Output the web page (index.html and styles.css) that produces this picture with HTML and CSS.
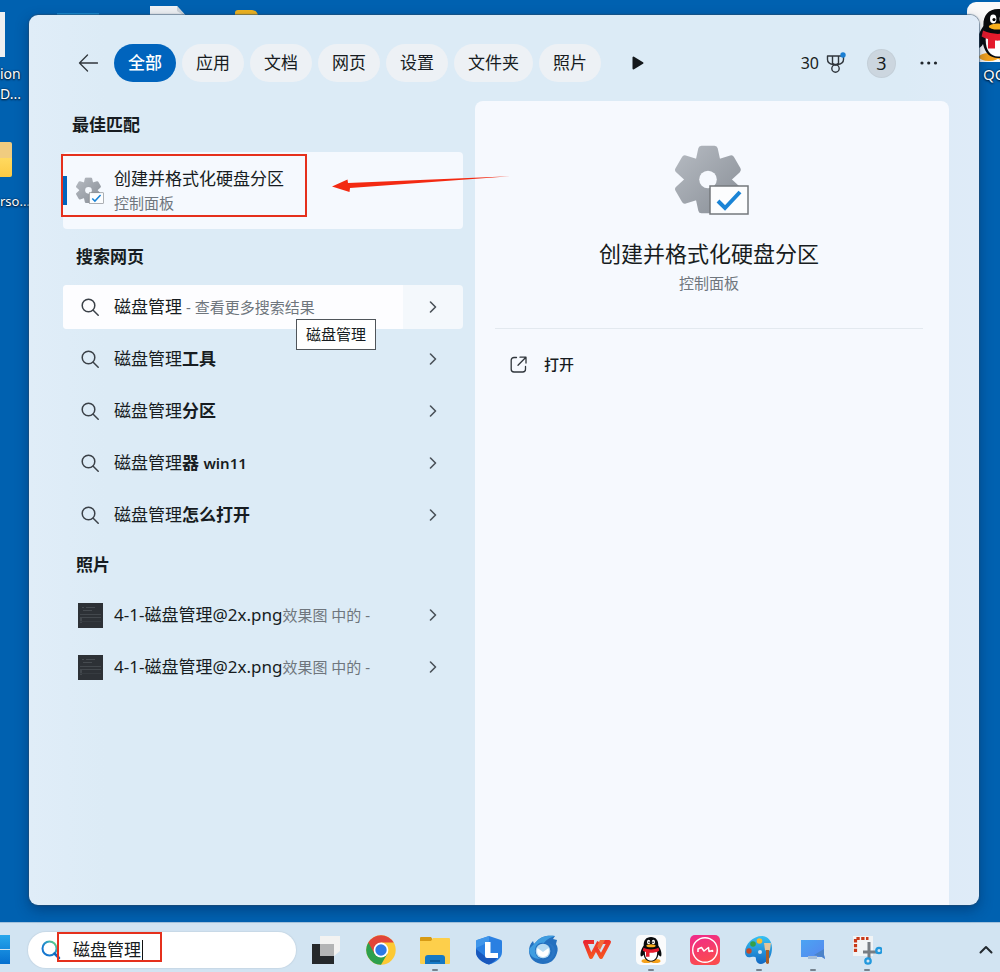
FILE: index.html
```html
<!DOCTYPE html>
<html lang="zh-CN">
<head>
<meta charset="utf-8">
<meta name="viewport" content="width=device-width, initial-scale=1">
<title>搜索</title>
<link rel="stylesheet" href="styles.css">
</head>
<body>
<svg class="defs" aria-hidden="true">
  <defs>
    <linearGradient id="steel" x1="0" y1="0" x2="1" y2="1"><stop offset="0" stop-color="#b7bcc3"/><stop offset="1" stop-color="#868c94"/></linearGradient>
    <path id="tooth" d="M-9 -19 L-6.500 -30.500 L6.500 -30.500 L9 -19 Z" stroke="#fff" stroke-width="6.500" stroke-linejoin="round"/>
    <mask id="gear-mask" maskUnits="userSpaceOnUse" x="-2" y="-2" width="78" height="76">
      <g transform="translate(33 34.500)" fill="#fff">
        <circle r="23.500"/>
        <use href="#tooth"/><use href="#tooth" transform="rotate(60)"/><use href="#tooth" transform="rotate(120)"/>
        <use href="#tooth" transform="rotate(180)"/><use href="#tooth" transform="rotate(240)"/><use href="#tooth" transform="rotate(300)"/>
        <circle r="8.800" fill="#000"/>
      </g>
    </mask>
    <symbol id="gear" viewBox="0 0 74 70">
      <rect width="70" height="70" fill="url(#steel)" mask="url(#gear-mask)"/>
      <rect x="35" y="41" width="38" height="28" fill="#fcfdfe" stroke="#74787c" stroke-width="1.500"/>
      <path d="M43 56l7 7 15-16" fill="none" stroke="#1a84d6" stroke-width="4"/>
    </symbol>
    <symbol id="loupe" viewBox="0 0 18 18"><g fill="none" stroke="#3b4148" stroke-width="1.500" stroke-linecap="round"><circle cx="7.500" cy="7.500" r="6.300"/><path d="M12.200 12.200l5 5"/></g></symbol>
    <symbol id="next" viewBox="0 0 8 12"><path d="M1.500 1l5 5-5 5" fill="none" stroke="#4a5158" stroke-width="1.600" stroke-linecap="round" stroke-linejoin="round"/></symbol>
    <symbol id="thumb" viewBox="0 0 25 25"><path d="M0 0h25v25H0z" fill="#2d3136"/><path d="M4 4.500h2m2 0h9M5 7.500h9" stroke="#464b50"/><path d="M2 11.500h21M2 14.500h21" stroke="#43484d"/><path d="M3 15v5" stroke="#595e62"/><path d="M2 18.500h21" stroke="#363b40"/></symbol>
    <symbol id="penguin" viewBox="0 0 30 30">
      <ellipse cx="10.500" cy="26" rx="5" ry="2" fill="#f6a21b"/><ellipse cx="19.500" cy="26" rx="5" ry="2" fill="#f6a21b"/>
      <path d="M15 2c-5 0-7.500 3.500-7.300 8.500C5 14.500 3.700 19 5 21.500c1 0 2-1 2.500-2C8.500 24 11 26.500 15 26.500S21.500 24 22.500 19.500c.5 1 1.500 2 2.500 2 1.300-2.500 0-7-2.700-11C22.500 5.500 20 2 15 2z" fill="#090b0d"/>
      <path d="M9 15.500c-.8 6 1.700 10.300 6 10.300s6.800-4.300 6-10.300z" fill="#fff"/>
      <path d="M7.500 12.800c5 2.200 10 2.200 15 0l.7 3c-2.500 1.500-6 2.200-9.700 2v4H10V17c-1.200-.2-2.300-.7-3.200-1.200z" fill="#e51b2c"/>
      <ellipse cx="12.600" cy="7" rx="1.600" ry="2.200" fill="#fff"/><ellipse cx="17.400" cy="7" rx="1.600" ry="2.200" fill="#fff"/>
      <circle cx="13" cy="7.300" r=".8"/><circle cx="17" cy="7.300" r=".8"/>
      <ellipse cx="15" cy="10.800" rx="4.600" ry="1.500" fill="#f9b01e"/>
    </symbol>
  </defs>
</svg>

<main class="desktop">
  <div class="wallpaper">
    <span class="shape sheet-left"></span>
    <span class="label label-doc">ion<br>D...</span>
    <span class="shape folder-left"></span>
    <span class="label label-folder">rso...</span>
    <span class="shape peek-cyan"></span>
    <svg class="shape peek-sheet" viewBox="0 0 38 12"><path d="M0 0h27l11 12H0z" fill="#f0f2f4"/><path d="M27 0v5l11 7z" fill="#cdd3d8"/></svg>
    <span class="shape peek-yellow"></span>
    <span class="shape qq-tile"><svg viewBox="5 1 20 27"><use href="#penguin" width="30" height="30"/></svg></span>
    <span class="label label-qq">QQ</span>
  </div>

  <section class="panel" aria-label="搜索">
    <header class="toolbar">
      <button class="plain back" aria-label="返回"><svg width="20" height="18" viewBox="0 0 20 18"><path d="M9.500 1L1.500 9l8 8M1.500 9H19.500" fill="none" stroke="#30363c" stroke-width="1.300" stroke-linecap="round" stroke-linejoin="round"/></svg></button>
      <nav class="filters">
        <button class="chip active">全部</button>
        <button class="chip">应用</button>
        <button class="chip">文档</button>
        <button class="chip">网页</button>
        <button class="chip">设置</button>
        <button class="chip">文件夹</button>
        <button class="chip">照片</button>
      </nav>
      <button class="plain play" aria-label="更多筛选"><svg width="12" height="14" viewBox="0 0 12 14"><path d="M1.500 1.500v11l9-5.500z" fill="#14181c" stroke="#14181c" stroke-width="2" stroke-linejoin="round"/></svg></button>
      <div class="account">
        <button class="plain points">30
          <svg width="20" height="22" viewBox="0 0 20 22"><g fill="none" stroke="#30363c" stroke-width="1.400" stroke-linejoin="round"><path d="M1.500 4h16v3.500c0 2.500-2.500 4.500-5.500 5H7c-3-.5-5.500-2.500-5.500-5zM6.500 4v7.500l3 1.500 3-1.500V4"/><circle cx="9.500" cy="16.500" r="3.700"/></g><circle cx="17" cy="3" r="2.700" fill="#1b7fd3"/></svg>
        </button>
        <button class="plain avatar">3</button>
        <button class="plain more" aria-label="选项"><svg width="18" height="4" viewBox="0 0 18 4" fill="#20262c"><circle cx="2" cy="2" r="1.600"/><circle cx="8.700" cy="2" r="1.600"/><circle cx="15.500" cy="2" r="1.600"/></svg></button>
      </div>
    </header>

    <div class="columns">
      <div class="results">
        <h2 class="group first">最佳匹配</h2>
        <div class="best-wrap">
          <button class="best">
            <span class="slot"><svg width="28" height="27"><use href="#gear"/></svg></span>
            <span class="stack"><span>创建并格式化硬盘分区</span><span class="muted">控制面板</span></span>
          </button>
          <span class="mark mark-best"></span>
          <svg class="arrow" width="182" height="20" viewBox="0 0 182 20"><path d="M0 11.500L15.500 4.500 16 8 181 1 18 13l-.5 4z" fill="#f32a12"/></svg>
        </div>

        <h2 class="group">搜索网页</h2>
        <ul class="list">
          <li class="row selected">
            <button class="open"><span class="slot"><svg width="18" height="18"><use href="#loupe"/></svg></span><span>磁盘管理<span class="muted"> - 查看更多搜索结果</span></span></button>
            <button class="expand" aria-label="展开"><svg width="8" height="12"><use href="#next"/></svg></button>
            <span class="tip" role="tooltip">磁盘管理</span>
          </li>
          <li class="row">
            <button class="open"><span class="slot"><svg width="18" height="18"><use href="#loupe"/></svg></span><span>磁盘管理<b>工具</b></span></button>
            <button class="expand" aria-label="展开"><svg width="8" height="12"><use href="#next"/></svg></button>
          </li>
          <li class="row">
            <button class="open"><span class="slot"><svg width="18" height="18"><use href="#loupe"/></svg></span><span>磁盘管理<b>分区</b></span></button>
            <button class="expand" aria-label="展开"><svg width="8" height="12"><use href="#next"/></svg></button>
          </li>
          <li class="row">
            <button class="open"><span class="slot"><svg width="18" height="18"><use href="#loupe"/></svg></span><span>磁盘管理<b>器 </b><b class="latin">win11</b></span></button>
            <button class="expand" aria-label="展开"><svg width="8" height="12"><use href="#next"/></svg></button>
          </li>
          <li class="row">
            <button class="open"><span class="slot"><svg width="18" height="18"><use href="#loupe"/></svg></span><span>磁盘管理<b>怎么打开</b></span></button>
            <button class="expand" aria-label="展开"><svg width="8" height="12"><use href="#next"/></svg></button>
          </li>
        </ul>

        <h2 class="group">照片</h2>
        <ul class="list">
          <li class="row">
            <button class="open"><span class="slot"><svg width="25" height="25"><use href="#thumb"/></svg></span><span>4-1-磁盘管理@2x.png<span class="muted">效果图 中的 -</span></span></button>
            <button class="expand" aria-label="展开"><svg width="8" height="12"><use href="#next"/></svg></button>
          </li>
          <li class="row">
            <button class="open"><span class="slot"><svg width="25" height="25"><use href="#thumb"/></svg></span><span>4-1-磁盘管理@2x.png<span class="muted">效果图 中的 -</span></span></button>
            <button class="expand" aria-label="展开"><svg width="8" height="12"><use href="#next"/></svg></button>
          </li>
        </ul>
      </div>

      <article class="details">
        <svg class="hero" width="74" height="70"><use href="#gear"/></svg>
        <h1>创建并格式化硬盘分区</h1>
        <p class="muted kind">控制面板</p>
        <hr>
        <button class="action"><svg width="17" height="17" viewBox="0 0 17 17"><g fill="none" stroke="#30363c" stroke-width="1.300" stroke-linecap="round" stroke-linejoin="round"><path d="M6.500 1.500H4A2.800 2.800 0 0 0 1.200 4.300v8.900A2.800 2.800 0 0 0 4 16h8.700a2.800 2.800 0 0 0 2.800-2.800v-2.700M10 1.200h6v5.800M15.700 1.500L8 9.200"/></g></svg>打开</button>
      </article>
    </div>
  </section>
</main>

<footer class="taskbar">
  <button class="start" aria-label="开始"><svg width="10" height="29" viewBox="0 0 10 29"><defs><linearGradient id="win" x1="0" y1="0" x2="0" y2="1"><stop offset="0" stop-color="#27a7ec"/><stop offset="1" stop-color="#0670cf"/></linearGradient></defs><path d="M0 0h10v14H0zM0 15h10v14H0z" fill="url(#win)"/></svg></button>
  <label class="search">
    <svg width="20" height="20" viewBox="0 0 20 20"><defs><linearGradient id="lens" x1="0" y1="1" x2="1" y2="0"><stop offset=".3" stop-color="#1778cf"/><stop offset=".65" stop-color="#2d9fc4"/><stop offset=".9" stop-color="#62cf85"/></linearGradient></defs><circle cx="8.500" cy="8.500" r="7" fill="none" stroke="url(#lens)" stroke-width="2"/><path d="M13.500 13.500l4.500 4.500" stroke="#1668bd" stroke-width="2.500" stroke-linecap="round"/></svg>
    <input type="text" value="磁盘管理" aria-label="搜索">
    <span class="caret"></span>
    <span class="mark mark-search"></span>
  </label>
  <button class="app" aria-label="任务视图"><svg viewBox="0 0 30 30"><path d="M2 9h22v20H2z" fill="#25282b"/><path d="M10 1h20v15l-6 5H10z" fill="#f3f3f2"/><path d="M10 9h14v12H10z" fill="#b3b4b5"/></svg></button>
  <nav class="apps">
    <button class="app" aria-label="Chrome"><svg viewBox="0 0 30 30"><circle cx="15" cy="15" r="14.700" fill="#fcc934"/><path d="M15 15L2.300 7.600A14.700 14.700 0 0 0 15 29.700L21.400 18.700z" fill="#2da04d"/><path d="M15 15v-7.400h12.700A14.700 14.700 0 0 0 2.300 7.600L8.600 18.700z" fill="#e0453a"/><circle cx="15" cy="15" r="7.400" fill="#fff"/><circle cx="15" cy="15" r="5.700" fill="#2b79e6"/></svg></button>
    <button class="app running" aria-label="文件资源管理器"><svg viewBox="0 0 30 30"><path d="M0 3q0-1 1-1h10l2 3v3H0z" fill="#d79a14"/><path d="M0 6h11l2-3h16q1 0 1 1v24q0 1-1 1H1q-1 0-1-1z" fill="#fdcf4b"/><path d="M5 29v-6q0-3 3-3h14q3 0 3 3v6z" fill="#1679c5"/><path d="M10 25h10v2H10z" fill="#0e5e9e"/></svg></button>
    <button class="app" aria-label="联想电脑管家"><svg viewBox="0 0 30 30"><path d="M15 1l12 4q1 .4 1 1.500V17c0 6-6 10.500-13 12.500C8 27.500 2 23 2 17V6.500Q2 5.400 3 5z" fill="#2a80e2"/><path d="M2 13V6.500Q2 5.400 3 5l12-4v6z" fill="#4096ea"/><path d="M15 29.500C8 27.500 2 23 2 17v-3l10 8h12c-2 3-5 6-9 7.500z" fill="#1958bd"/><path d="M11 7h5.500v11H24v5H13q-2 0-2-2z" fill="#fff"/></svg></button>
    <button class="app" aria-label="Thunderbird"><svg viewBox="0 0 30 30"><path d="M9 6C13 1 20 0 27 1l-2 3 4 1-1 4c2 3 2 6 1 9-2 7-7 11-14 11S1 24 1 16c0-4 1-7 4-10l1 3z" fill="#2470bf"/><path d="M9 6C13 1 20 0 27 1c-6 2-9 4-11 7-5-1-9 2-9 8 0 4 3 7 6 8C4 24 1 19 1 14l5-5z" fill="#3f9de0"/><circle cx="15" cy="16" r="7.300" fill="#b8dbf2"/><path d="M9.500 13l5.500 4 5.500-4c1.500 5-1 9-5.500 9s-7-4-5.500-9z" fill="#fff"/><path d="M16 8c6 0 9 4 8 10-1 4-4 7-9 8 8 1 12-5 12-10s-4-9-11-8z" fill="#2b76c5"/></svg></button>
    <button class="app" aria-label="WPS"><svg viewBox="0 0 30 30"><defs><linearGradient id="wps" x1="0" y1="0" x2=".5" y2="1"><stop offset="0" stop-color="#ea2531"/><stop offset="1" stop-color="#f65520"/></linearGradient></defs><g fill="none" stroke="url(#wps)" stroke-width="4" stroke-linejoin="round"><path d="M12 7H3l6 15 8-15"/><path d="M14 13l5 9 8-15h-6"/></g><path d="M15 11l3-6h5l-5 10z" fill="#f36a38"/></svg></button>
    <button class="app running" aria-label="QQ"><svg viewBox="0 0 30 30"><rect width="30" height="30" rx="5" fill="#fafbfc"/><use href="#penguin" width="30" height="30"/></svg></button>
    <button class="app" aria-label="录音"><svg viewBox="0 0 30 30"><defs><linearGradient id="rose" x1="0" y1="0" x2=".3" y2="1"><stop offset="0" stop-color="#ef298d"/><stop offset="1" stop-color="#fb4b50"/></linearGradient></defs><rect width="30" height="30" rx="5" fill="url(#rose)"/><g fill="none" stroke="#fff"><circle cx="15" cy="15" r="12.300" stroke-width="1.400"/><path d="M8 17v-3l3.500-1.500 2.500 3.500 4.500-3.500.5 4 3.500-1V17" stroke-width="1.500" stroke-linejoin="round"/></g></svg></button>
    <button class="app running" aria-label="画图"><svg viewBox="0 0 30 30"><defs><linearGradient id="palette" x1="0" y1="0" x2="0" y2="1"><stop offset="0" stop-color="#38c2f2"/><stop offset="1" stop-color="#1268c3"/></linearGradient></defs><path d="M18 1C9 1 1 9 1 17c0 4 2 6 6 5 5-1 5 0 5 3 1 4 5 5 8 3 5-2 8-8 8-15 0-7-4-12-10-12zm-2 14a2 2 0 1 1 0 4 2 2 0 0 1 0-4z" fill="url(#palette)" fill-rule="evenodd"/><circle cx="5" cy="16" r="2.700" fill="#c44a28"/><circle cx="9" cy="9" r="2.800" fill="#35a048"/><circle cx="15.500" cy="6" r="2.800" fill="#f4bc31"/><path d="M20 8h7l-1 7-2 2-3-2z" fill="#e3c49a"/><path d="M22 15h3v13q-1.500 2-3 0z" fill="#a95f28"/></svg></button>
    <button class="app running" aria-label="远程桌面"><svg viewBox="0 0 30 30"><defs><linearGradient id="screen" x1="0" y1="0" x2="1" y2="1"><stop offset="0" stop-color="#4ba4f3"/><stop offset="1" stop-color="#5785ee"/></linearGradient></defs><path d="M3 5h23v15l1 4-3-2H3z" fill="url(#screen)"/><path d="M16 20l10-6v6l1 4-3-2z" fill="#4c83c9"/><path d="M10 21h9v3h-9z" fill="#a5bed9"/></svg></button>
    <button class="app running" aria-label="截图工具"><svg viewBox="0 0 30 30"><path d="M1 1h20v20H1z" fill="#f1f4f6"/><path d="M3.500 17V3.500h13" fill="none" stroke="#c93918" stroke-width="3.200" stroke-dasharray="3.300 1.500"/><path d="M17 7v17M11 17h14" stroke="#777d83" stroke-width="3"/><g fill="none" stroke="#2198dd" stroke-width="2.300"><circle cx="16" cy="26" r="2.700"/><circle cx="27" cy="15.500" r="2.700"/></g></svg></button>
  </nav>
  <button class="tray" aria-label="显示隐藏的图标"><svg width="14" height="9" viewBox="0 0 14 9"><path d="M1.500 7.500L7 2l5.500 5.500" fill="none" stroke="#22292f" stroke-width="2" stroke-linecap="round" stroke-linejoin="round"/></svg></button>
</footer>
</body>
</html>
```

FILE: styles.css
```css
* { box-sizing: border-box; }

body {
  margin: 0;
  min-height: 100vh;
  display: flex;
  flex-direction: column;
  overflow-x: hidden;
  background: #0061b0;
  color: #171c21;
  font: 17px/24px "Noto Sans", "Noto Sans CJK SC", sans-serif;
}

button, input {
  margin: 0;
  padding: 0;
  border: 0;
  background: none;
  color: inherit;
  font: inherit;
  text-align: left;
}

svg { display: block; flex: none; }
.defs { position: absolute; width: 0; height: 0; }
.muted { color: #6f767d; font-size: 15px; }

.desktop {
  position: relative;
  flex: 1;
  display: flex;
  padding: 15px 21px 17px 29px;
}

/* Desktop items behind the panel */
.wallpaper { position: absolute; inset: 0; overflow: hidden; }
.shape, .label { position: absolute; }
.label {
  color: #fff;
  font-size: 14px;
  line-height: 20px;
  text-shadow: 0 1px 2px #00182d, 0 0 2px #00182d;
}
.sheet-left { left: 0; top: 12px; width: 5px; height: 45px; background: #eef0f1; }
.label-doc { left: 0; top: 64px; }
.folder-left { left: 0; top: 142px; width: 12px; height: 35px; border-radius: 0 2px 2px 0; background: linear-gradient(#f0cc80 45%, #ffd95f 46%, #fcca45); }
.label-folder { left: 0; top: 191px; font-size: 13px; }
.peek-cyan { left: 57px; top: 13px; width: 42px; height: 8px; background: #198bd0; }
.peek-sheet { left: 150px; top: 6px; width: 38px; height: 12px; }
.peek-yellow { left: 235px; top: 10px; width: 23px; height: 8px; border-radius: 3px 6px 0 0; background: #f0b41f; }
.qq-tile { right: -27px; top: 2px; width: 60px; height: 60px; border-radius: 9px 9px 0 0; background: #fafafa; overflow: hidden; }
.qq-tile svg { width: 40px; height: 56px; margin: 4px 0 0 11px; }
.label-qq { left: calc(100% - 17px); top: 64px; font-size: 15px; }

.panel {
  position: relative;
  flex: 1;
  min-width: 0;
  display: flex;
  flex-direction: column;
  border-radius: 9px;
  background: linear-gradient(90deg, #e0edf8, #dcebf6 8%, #dcebf6 92%, #dfebf8);
  box-shadow: 0 0 1px 1px rgba(40, 75, 105, .55), 0 5px 14px rgba(0, 25, 65, .4);
}

.toolbar {
  display: flex;
  align-items: center;
  padding: 29px 41px 0 49px;
  height: 67px;
}
.plain { display: flex; align-items: center; justify-content: center; }
.back { margin-right: 16px; }
.filters { display: flex; gap: 6px; }
.chip {
  height: 38px;
  padding: 0 14px;
  border-radius: 19px;
  background: #edf1f5;
  white-space: nowrap;
}
.chip.active { background: #0064bd; color: #fff; font-weight: 500; }
.play { margin-left: 31px; }
.account { display: flex; align-items: center; margin-left: auto; }
.points { gap: 7px; font-size: 16px; }
.avatar {
  width: 27px;
  height: 27px;
  margin: 0 25px 0 22px;
  border-radius: 50%;
  background: #ccd6df;
  box-shadow: 0 0 0 1px #c4cfd8;
  font-size: 18px;
}

.columns {
  flex: 1;
  display: grid;
  grid-template-columns: 400fr 474fr;
  gap: 12px;
  padding: 19px 30px 0 34px;
}
.results { min-width: 0; }
.group { margin: 16px 0 16px 13px; font-size: 17px; line-height: 24px; font-weight: 700; }
.group.first { margin: 12px 0 15px 9px; }

.slot {
  flex: none;
  display: flex;
  justify-content: center;
  width: 26px;
  margin: 0 11px 0 14px;
}

.best-wrap { position: relative; }
.best {
  display: flex;
  align-items: center;
  width: 100%;
  height: 77px;
  border-radius: 4px;
  background: linear-gradient(#0064bd, #0064bd) left center / 4px 29px no-repeat #f5f9fe;
}
.stack { display: flex; flex-direction: column; }
.mark { position: absolute; border: 2px solid #e5301c; pointer-events: none; }
.mark-best { left: -2px; top: 2px; width: 246px; height: 63px; }
.arrow { position: absolute; left: 269px; top: 23px; z-index: 2; }

.list { display: flex; flex-direction: column; gap: 8px; margin: 0; padding: 0; list-style: none; }
.row { position: relative; display: flex; height: 44px; border-radius: 4px; }
.open { flex: 1; min-width: 0; display: flex; align-items: center; white-space: nowrap; }
.expand { flex: none; width: 60px; display: flex; align-items: center; justify-content: center; }
.selected { background: #f4f8fc; }
.selected .open { border-radius: 4px 0 0 4px; background: #fdfdff; }
.latin { font-size: 15px; font-weight: 600; }
.tip {
  position: absolute;
  left: 233px;
  top: 34px;
  z-index: 2;
  padding: 3px 9px;
  border: 1px solid #50555a;
  background: #fff;
  font-size: 15px;
  line-height: 23px;
}

.details {
  display: flex;
  flex-direction: column;
  padding: 44px 26px 0 20px;
  border-radius: 8px 8px 0 0;
  background: #f6f9fe;
}
.hero { align-self: center; margin-left: 6px; }
.details h1 { margin: 22px 0 0; font-size: 22px; line-height: 32px; font-weight: 400; text-align: center; }
.kind { margin: 2px 0 0; text-align: center; }
.details hr { width: 100%; margin: 33px 0 0; border: 0; border-top: 1px solid #e3e9ef; }
.action { display: flex; align-items: center; gap: 17px; margin: 23px 0 0 15px; font-size: 15px; font-weight: 500; }

.taskbar {
  display: flex;
  align-items: center;
  height: 50px;
  padding-top: 4px;
  border-top: 1px solid #a4c2dc;
  background: #d2e4f2;
}
.start { margin-right: 18px; }
.search {
  position: relative;
  display: flex;
  align-items: center;
  flex: 0 0 268px;
  height: 36px;
  padding-left: 13px;
  border-radius: 18px;
  background: #fff;
  box-shadow: 0 0 1px 1px #c7d8e6;
}
.search input { width: 69px; margin-left: 12px; outline: 0; }
.caret { width: 1px; height: 20px; background: #111; }
.mark-search { left: 29px; top: 0; width: 105px; height: 30px; }
.app { position: relative; width: 30px; height: 30px; }
.app svg { width: 30px; height: 30px; }
.search + .app { margin: 0 26px 0 14px; }
.apps { display: flex; gap: 24px; }
.running::after {
  content: "";
  position: absolute;
  left: 12px;
  bottom: -6px;
  width: 6px;
  height: 2px;
  border-radius: 1px;
  background: #76838f;
}
.tray { margin: 0 7px 0 auto; }
```
